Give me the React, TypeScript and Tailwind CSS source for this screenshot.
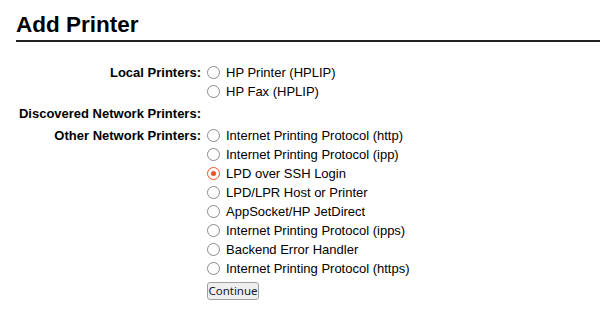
const LOCAL = ["HP Printer (HPLIP)", "HP Fax (HPLIP)"];

const OTHER = [
  "Internet Printing Protocol (http)",
  "Internet Printing Protocol (ipp)",
  "LPD over SSH Login",
  "LPD/LPR Host or Printer",
  "AppSocket/HP JetDirect",
  "Internet Printing Protocol (ipps)",
  "Backend Error Handler",
  "Internet Printing Protocol (https)",
];

function Radio({ checked }: { checked?: boolean }) {
  return checked ? (
    <span className="flex h-[13px] w-[13px] shrink-0 items-center justify-center rounded-full border-[1.5px] border-[#e95420] bg-white">
      <span className="h-[5px] w-[5px] rounded-full bg-[#e95420]" />
    </span>
  ) : (
    <span className="h-[13px] w-[13px] shrink-0 rounded-full border border-[#8a8a8a] bg-white" />
  );
}

function Option({ label, checked }: { label: string; checked?: boolean }) {
  return (
    <label className="flex h-[19px] items-center gap-[6px]">
      <Radio checked={checked} />
      <span>{label}</span>
    </label>
  );
}

export default function App() {
  return (
    <div className="h-[315px] w-[600px] overflow-hidden bg-white pl-4 font-['Liberation_Sans',Arial,sans-serif] text-[13px] leading-[19px] text-black">
      <h2 className="mt-[12px] border-b-2 border-[#222] pb-[2px] text-[22.5px] font-bold leading-[26px]">
        Add Printer
      </h2>

      <div className="mt-[21px] grid grid-cols-[185px_auto] gap-x-[6px] gap-y-[3px]">
        <div className="text-right font-bold">Local Printers:</div>
        <div className="flex flex-col">
          {LOCAL.map((l) => (
            <Option key={l} label={l} />
          ))}
        </div>

        <div className="text-right font-bold">Discovered Network Printers:</div>
        <div />

        <div className="text-right font-bold">Other Network Printers:</div>
        <div className="flex flex-col">
          {OTHER.map((l) => (
            <Option key={l} label={l} checked={l === "LPD over SSH Login"} />
          ))}
        </div>

        <div />
        <div>
          <button
            type="button"
            className="h-[18px] w-[52px] rounded-[3px] border border-[#a0a0a0] bg-[#efefef] p-0 text-center font-['Noto_Sans',sans-serif] text-[11.5px] leading-[16px] text-[#1a1a1a]"
          >
            Continue
          </button>
        </div>
      </div>
    </div>
  );
}
